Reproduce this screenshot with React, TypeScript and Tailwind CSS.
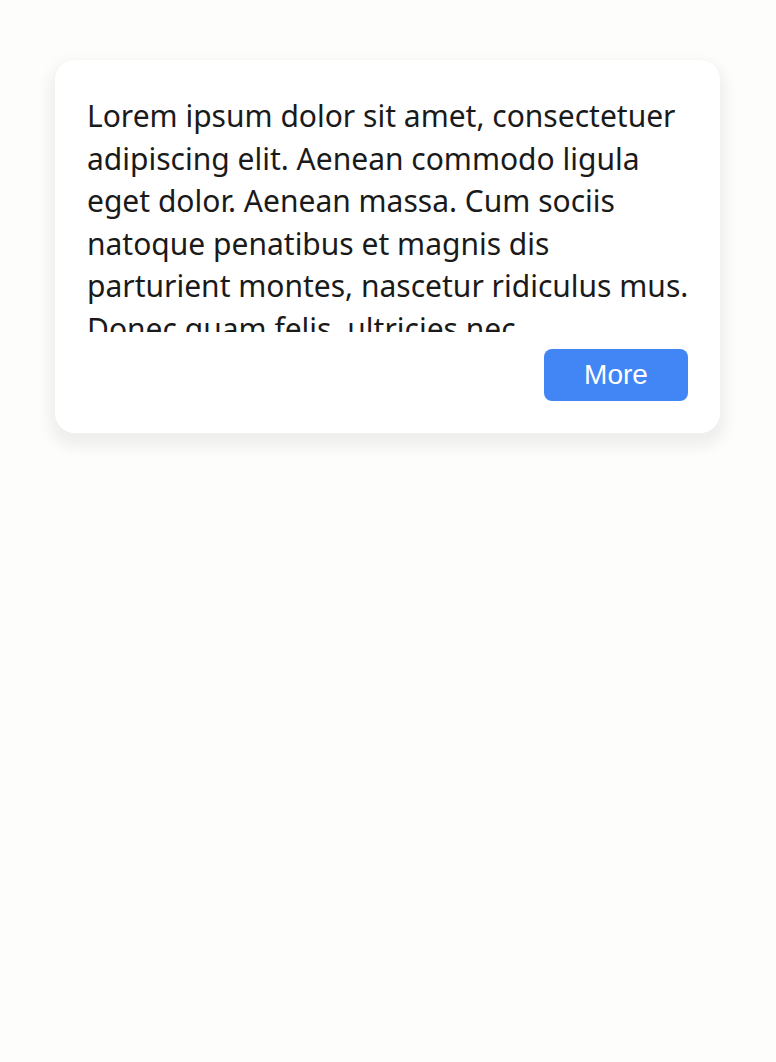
export default function App() {
  return (
    <div className="min-h-[1062px] w-full bg-[#fdfdfc] pt-[60px] px-[55px]">
      <div className="w-[665px] rounded-[20px] bg-white p-8 pt-[35px] shadow-[0_8px_14px_6px_rgba(0,0,0,0.06)] flex flex-col">
        <div className="h-[237px] overflow-hidden mr-[-7px]">
          <p className="text-[30px] leading-[42.6px] text-[#1a1a1a] font-['Noto_Sans',sans-serif]">
            Lorem ipsum dolor sit amet, consectetuer adipiscing elit. Aenean commodo ligula eget dolor. Aenean massa. Cum sociis natoque penatibus et magnis dis parturient montes, nascetur ridiculus mus. Donec quam felis, ultricies nec, pellentesque eu, pretium quis, sem.
          </p>
        </div>
        <div className="flex justify-end mt-[17px]">
          <button className="w-[144px] h-[52px] rounded-[8px] bg-[#4285f4] text-white text-[28px] font-['Liberation_Sans',Arial,sans-serif]">
            More
          </button>
        </div>
      </div>
    </div>
  );
}
